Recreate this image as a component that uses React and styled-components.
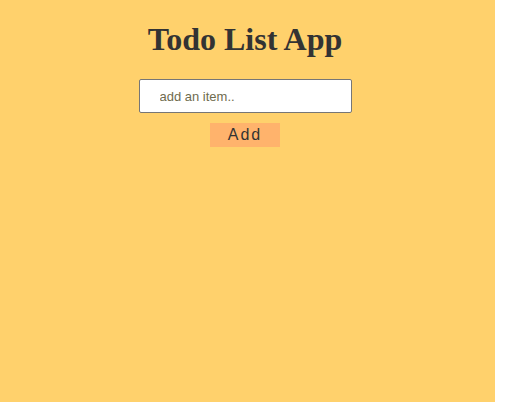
import React, { useState } from "react";
import styled, { createGlobalStyle } from "styled-components";

const GlobalStyle = createGlobalStyle`
  html, body {
    margin: 0;
    padding: 0;
    background: #fff;
  }
`;

const Page = styled.div`
  box-sizing: border-box;
  width: 495px;
  height: 402px;
  padding-right: 5px;
  background-color: #ffd16c;
  display: flex;
  flex-direction: column;
  align-items: center;
`;

const Title = styled.h1`
  font-family: "Liberation Serif", "Times New Roman", serif;
  font-size: 32px;
  font-weight: bold;
  color: #333333;
  margin: 21px 0 22px;
  line-height: 36px;
`;

const Input = styled.input`
  box-sizing: border-box;
  width: 213px;
  height: 34px;
  padding: 0 0 0 20px;
  border: 1px solid #767676;
  border-radius: 2px;
  background: #fff;
  font-family: "Liberation Sans", Arial, sans-serif;
  font-size: 13px;
  color: #333;
  outline: none;
  &::placeholder {
    color: #6f6b4e;
  }
`;

const Button = styled.button`
  margin-top: 10px;
  width: 70px;
  height: 24px;
  padding: 0;
  border: none;
  background-color: #ffb36c;
  color: #333333;
  font-family: "Liberation Sans", Arial, sans-serif;
  font-size: 16px;
  letter-spacing: 2px;
  cursor: pointer;
`;

const App = () => {
  const [item, setItem] = useState("");
  return (
    <Page>
      <GlobalStyle />
      <Title>Todo List App</Title>
      <Input
        value={item}
        onChange={(e) => setItem(e.target.value)}
        placeholder="add an item.."
      />
      <Button onClick={() => setItem("")}>Add</Button>
    </Page>
  );
};

export default App;
